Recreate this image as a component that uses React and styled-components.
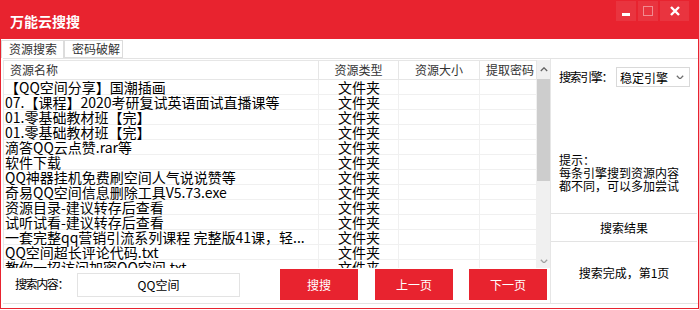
import React from "react";
import styled, { createGlobalStyle } from "styled-components";

const RED = "#e8232f";

const GlobalStyle = createGlobalStyle`
  html, body { margin: 0; padding: 0; background: #fff; }
  body { font-family: "Noto Sans CJK SC", "Microsoft YaHei", sans-serif; color: #000; }
`;

const Window = styled.div`
  width: 699px;
  height: 309px;
  box-sizing: border-box;
  border: 1px solid ${RED};
  border-top: none;
  background: #fff;
  display: flex;
  flex-direction: column;
  overflow: hidden;
`;

const TitleBar = styled.div`
  flex: none;
  height: 39px;
  background: ${RED};
  display: flex;
  justify-content: space-between;
  align-items: flex-start;
`;

const Title = styled.div`
  color: #fff;
  font-weight: bold;
  font-size: 14px;
  line-height: 18px;
  padding: 12px 0 0 9px;
`;

const Controls = styled.div`
  display: flex;
  gap: 2px;
  margin: 1px 9px 0 0;
`;

const CtrlButton = styled.div`
  width: ${(p) => p.$w}px;
  height: 20px;
  background: rgba(255, 255, 255, 0.08);
  display: flex;
  align-items: center;
  justify-content: center;
`;

const Tabs = styled.div`
  flex: none;
  display: flex;
  padding-top: 1px;
  box-sizing: border-box;
  height: 19px;
`;

const Tab = styled.div`
  width: ${(p) => p.$w}px;
  height: 18px;
  box-sizing: border-box;
  border: 1px solid #dcdcdc;
  border-bottom: ${(p) => (p.$active ? "none" : "1px solid #dcdcdc")};
  font-size: 12px;
  line-height: 16px;
  color: #333;
  padding-left: 7px;
  background: #fff;
`;

const Body = styled.div`
  flex: none;
  height: 246px;
  box-sizing: border-box;
  border-top: 1px solid #e3e3e3;
  border-bottom: 1px solid #e3e3e3;
  margin-left: 2px;
  display: flex;
`;

const LeftCol = styled.div`
  width: 547px;
  display: flex;
  flex-direction: column;
`;

const GridBox = styled.div`
  height: 208px;
  margin-top: 1px;
  box-sizing: border-box;
  border-left: 1px solid #e6e6e6;
  display: flex;
  overflow: hidden;
`;

const Table = styled.div`
  width: 533px;
  display: grid;
  grid-template-columns: 315px 80px 81px 57px;
  grid-auto-rows: 15px;
  grid-template-rows: 20px;
  align-content: start;
`;

const HeadCell = styled.div`
  box-sizing: border-box;
  border-top: 1px solid #e6e6e6;
  border-bottom: 1px solid #e6e6e6;
  border-right: 1px solid #e6e6e6;
  font-size: 12px;
  line-height: 18px;
  color: #333;
  text-align: ${(p) => (p.$left ? "left" : "center")};
  padding-left: ${(p) => (p.$left ? "6px" : "0")};
  white-space: nowrap;
`;

const Cell = styled.div`
  box-sizing: border-box;
  background: linear-gradient(to top, #f0f0f0 1px, transparent 1px),
    linear-gradient(to left, #f0f0f0 1px, transparent 1px);
  font-size: 14px;
  line-height: 15px;
  white-space: nowrap;
  text-align: ${(p) => (p.$center ? "center" : "left")};
  padding-left: ${(p) => (p.$center ? "0" : "1px")};
`;

const ScrollBar = styled.div`
  width: 13px;
  background: #f0f0f0;
  display: flex;
  flex-direction: column;
`;

const ScrollArrow = styled.div`
  height: ${(p) => p.$h}px;
  display: flex;
  align-items: center;
  justify-content: center;
`;

const Thumb = styled.div`
  height: 102px;
  background: #cdcdcd;
`;

const ScrollSpace = styled.div`
  flex: 1;
`;

const SearchRow = styled.div`
  flex: 1;
  display: flex;
  align-items: flex-start;
  padding-left: 12px;
`;

const Label = styled.div`
  font-size: 12px;
  line-height: 16px;
  letter-spacing: -1.4px;
  margin-top: ${(p) => p.$mt || 0}px;
  white-space: nowrap;
`;

const Input = styled.div`
  width: 163px;
  height: 24px;
  box-sizing: border-box;
  margin: 5px 0 0 9px;
  border: 1px solid #e3e3e3;
  font-size: 12px;
  line-height: 22px;
  text-align: center;
`;

const RedButton = styled.div`
  width: 78px;
  height: 31px;
  margin: 1px 0 0 ${(p) => p.$ml}px;
  background: ${RED};
  color: #fff;
  font-size: 12px;
  line-height: 31px;
  text-align: center;
`;

const RightPanel = styled.div`
  width: 147px;
  box-sizing: border-box;
  border-left: 1px solid #e6e6e6;
  display: flex;
  flex-direction: column;
`;

const EngineRow = styled.div`
  display: flex;
  align-items: center;
  padding: 8px 0 0 8px;
`;

const Select = styled.div`
  width: 74px;
  height: 20px;
  box-sizing: border-box;
  margin-left: 4px;
  border: 1px solid #d9d9d9;
  display: flex;
  align-items: center;
  justify-content: space-between;
  padding: 0 5px 0 3px;
  font-size: 12px;
`;

const Hint = styled.div`
  margin-top: 66px;
  padding-left: 8px;
  font-size: 12px;
  line-height: 13px;
`;

const ResultBox = styled.div`
  margin-top: auto;
  height: 90px;
  box-sizing: border-box;
  border-top: 1px solid #e3e3e3;
  display: flex;
  flex-direction: column;
`;

const ResultTitle = styled.div`
  height: 28px;
  box-sizing: border-box;
  border-bottom: 1px solid #e3e3e3;
  font-size: 12px;
  line-height: 28px;
  text-align: center;
`;

const ResultBody = styled.div`
  flex: 1;
  display: flex;
  align-items: center;
  justify-content: center;
  font-size: 12px;
`;

const Chevron = ({ up, color = "#606060", w = 8 }) => (
  <svg width={w} height={w * 0.6} viewBox="0 0 10 6">
    <path
      d={up ? "M1 5 L5 1 L9 5" : "M1 1 L5 5 L9 1"}
      fill="none"
      stroke={color}
      strokeWidth="1.6"
    />
  </svg>
);

const rows = [
  "【QQ空间分享】国潮插画",
  "07.【课程】2020考研复试英语面试直播课等",
  "01.零基础教材班【完】",
  "01.零基础教材班【完】",
  "滴答QQ云点赞.rar等",
  "软件下载",
  "QQ神器挂机免费刷空间人气说说赞等",
  "奇易QQ空间信息删除工具V5.73.exe",
  "资源目录-建议转存后查看",
  "试听试看-建议转存后查看",
  "一套完整qq营销引流系列课程 完整版41课，轻...",
  "QQ空间超长评论代码.txt",
  "教你一招访问加密QQ空间.txt",
];

export default function App() {
  return (
    <>
      <GlobalStyle />
      <Window>
        <TitleBar>
          <Title>万能云搜搜</Title>
          <Controls>
            <CtrlButton $w={20}>
              <svg width="8" height="10" viewBox="0 0 8 10">
                <rect x="0" y="7" width="8" height="3" fill="#fff" />
              </svg>
            </CtrlButton>
            <CtrlButton $w={20}>
              <svg width="10" height="10" viewBox="0 0 10 10">
                <rect x="0.5" y="0.5" width="9" height="9" fill="none" stroke="#f28a90" />
              </svg>
            </CtrlButton>
            <CtrlButton $w={29}>
              <svg width="10" height="10" viewBox="0 0 10 10">
                <path d="M1 1 L9 9 M9 1 L1 9" stroke="#fff" strokeWidth="2.4" />
              </svg>
            </CtrlButton>
          </Controls>
        </TitleBar>

        <Tabs>
          <Tab $w={63} $active>资源搜索</Tab>
          <Tab $w={59}>密码破解</Tab>
        </Tabs>

        <Body>
          <LeftCol>
            <GridBox>
              <Table>
                <HeadCell $left>资源名称</HeadCell>
                <HeadCell>资源类型</HeadCell>
                <HeadCell>资源大小</HeadCell>
                <HeadCell $left>提取密码</HeadCell>
                {rows.map((name, i) => (
                  <React.Fragment key={i}>
                    <Cell>{name}</Cell>
                    <Cell $center>文件夹</Cell>
                    <Cell />
                    <Cell />
                  </React.Fragment>
                ))}
              </Table>
              <ScrollBar>
                <ScrollArrow $h={19}>
                  <Chevron up />
                </ScrollArrow>
                <Thumb />
                <ScrollSpace />
                <ScrollArrow $h={14}>
                  <Chevron color="#a0a0a0" />
                </ScrollArrow>
              </ScrollBar>
            </GridBox>

            <SearchRow>
              <Label $mt={8}>搜索内容：</Label>
              <Input>QQ空间</Input>
              <RedButton $ml={40}>搜搜</RedButton>
              <RedButton $ml={17}>上一页</RedButton>
              <RedButton $ml={16}>下一页</RedButton>
            </SearchRow>
          </LeftCol>

          <RightPanel>
            <EngineRow>
              <Label>搜索引擎：</Label>
              <Select>
                <span>稳定引擎</span>
                <Chevron color="#707070" />
              </Select>
            </EngineRow>
            <Hint>
              提示：
              <br />
              每条引擎搜到资源内容
              <br />
              都不同，可以多加尝试
            </Hint>
            <ResultBox>
              <ResultTitle>搜索结果</ResultTitle>
              <ResultBody>搜索完成，第1页</ResultBody>
            </ResultBox>
          </RightPanel>
        </Body>
      </Window>
    </>
  );
}
